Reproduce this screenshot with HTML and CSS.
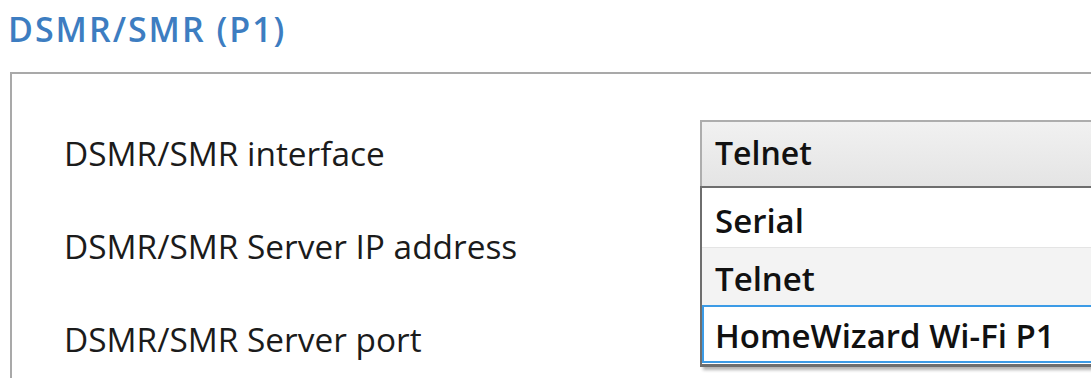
FILE: index.html
```html
<!DOCTYPE html>
<html lang="en">
<head>
<meta charset="utf-8">
<title>DSMR/SMR (P1)</title>
<link rel="stylesheet" href="styles.css">
</head>
<body>
<div class="page">
  <h1 class="title">DSMR/SMR (P1)</h1>
  <div class="panel">
    <div class="row">
      <div class="label">DSMR/SMR interface</div>
      <div class="control">
        <div class="select">Telnet</div>
        <ul class="dropdown">
          <li class="option">Serial</li>
          <li class="option option-selected">Telnet</li>
          <li class="option option-hover">HomeWizard Wi-Fi P1</li>
        </ul>
      </div>
    </div>
    <div class="row">
      <div class="label">DSMR/SMR Server IP address</div>
      <div class="control"></div>
    </div>
    <div class="row">
      <div class="label">DSMR/SMR Server port</div>
      <div class="control"></div>
    </div>
  </div>
</div>
</body>
</html>
```
FILE: styles.css
```css
html, body {
  margin: 0;
  padding: 0;
  background: #ffffff;
}

.page {
  width: 1091px;
  height: 378px;
  overflow: hidden;
  font-family: "Open Sans", "Noto Sans", sans-serif;
  color: #1b1b1b;
}

.title {
  margin: 0;
  padding: 9px 0 0 8px;
  height: 40px;
  font-size: 34px;
  line-height: 40px;
  font-weight: 600;
  letter-spacing: 2px;
  color: #3d7dc1;
}

.panel {
  margin: 23px 0 0 10px;
  width: 1200px;
  height: 400px;
  box-sizing: border-box;
  border: 2px solid #a9a9a9;
  padding: 46px 0 0 52px;
}

.row {
  display: grid;
  grid-template-columns: 636px 1fr;
  height: 93px;
  align-items: start;
}

.label {
  margin-top: 13px;
  font-size: 33.4px;
  line-height: 40px;
  font-weight: 400;
  white-space: nowrap;
}

.control {
  position: relative;
}

.select {
  height: 67px;
  box-sizing: border-box;
  border: 2px solid #adadad;
  border-bottom: none;
  background: linear-gradient(#f1f1f1, #e4e4e4);
  padding: 1px 0 0 13px;
  font-size: 32px;
  line-height: 60px;
  font-weight: 600;
  color: #111111;
}

.dropdown {
  position: absolute;
  top: 66px;
  left: 0;
  width: 500px;
  margin: 0;
  padding: 1px 0;
  list-style: none;
  background: #ffffff;
  border: 2px solid #6e6e6e;
  border-bottom-width: 3px;
  box-shadow: 3px 3px 3px rgba(0, 0, 0, 0.3);
}

.option {
  height: 58px;
  box-sizing: border-box;
  padding: 6px 0 0 13px;
  font-size: 33px;
  line-height: 52px;
  font-weight: 600;
  color: #111111;
  white-space: nowrap;
}

.option-selected {
  border-top: 1px solid #e4e4e4;
  padding-top: 5px;
  background: #f3f3f3;
}

.option-hover {
  border: 2px solid #3c9be6;
  padding: 5px 0 0 11px;
  line-height: 47px;
}
```
